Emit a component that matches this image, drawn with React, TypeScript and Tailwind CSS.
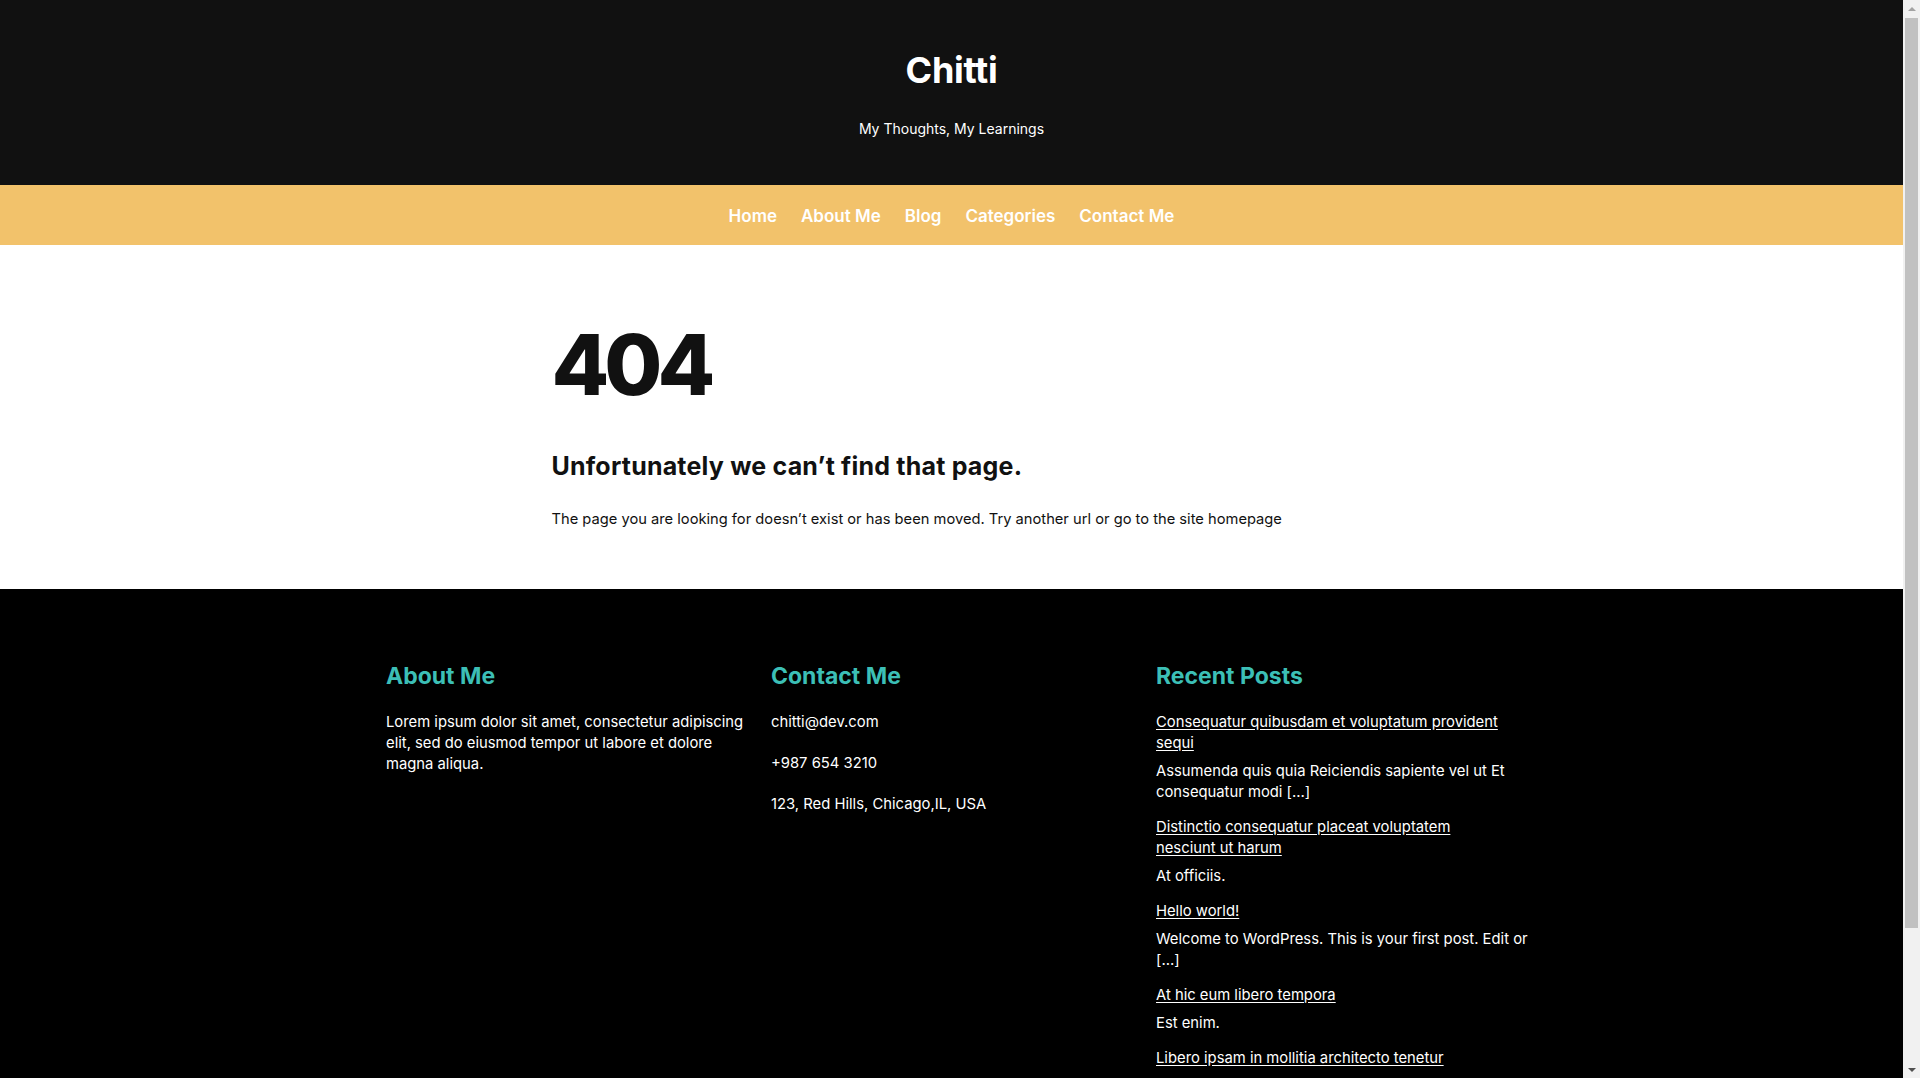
import React from 'react';

const navLinks = ['Home', 'About Me', 'Blog', 'Categories', 'Contact Me'];

const recentPosts = [
  {
    title: 'Consequatur quibusdam et voluptatum provident sequi',
    excerpt: 'Assumenda quis quia Reiciendis sapiente vel ut Et consequatur modi […]',
  },
  {
    title: 'Distinctio consequatur placeat voluptatem nesciunt ut harum',
    excerpt: 'At officiis.',
  },
  {
    title: 'Hello world!',
    excerpt: 'Welcome to WordPress. This is your first post. Edit or […]',
  },
  {
    title: 'At hic eum libero tempora',
    excerpt: 'Est enim.',
  },
  {
    title: 'Libero ipsam in mollitia architecto tenetur',
    excerpt: 'Quia voluptas.',
  },
];

// the browser's classic scrollbar, as it appears in the screenshot
const Scrollbar: React.FC = () => (
  <div className="fixed top-0 right-0 h-screen w-[17px] bg-[#f1f1f1] flex flex-col items-center">
    <div className="h-[17px] flex items-center justify-center">
      <div className="w-0 h-0 border-x-[4px] border-x-transparent border-b-[4px] border-b-[#a3a3a3]" />
    </div>
    <div className="w-[13px] h-[910px] mt-[1px] bg-[#c1c1c1]" />
    <div className="flex-1" />
    <div className="h-[17px] flex items-center justify-center">
      <div className="w-0 h-0 border-x-[4px] border-x-transparent border-t-[4px] border-t-[#505050]" />
    </div>
  </div>
);

const App: React.FC = () => {
  return (
    <div className="font-['Inter',sans-serif]">
      <div className="mr-[17px]">
        <header className="bg-[#111111] h-[185px] flex flex-col items-center">
          <h1 className="text-white text-[36px] font-bold leading-none mt-[52px] tracking-[-0.3px]">Chitti</h1>
          <p className="text-white text-[14px] mt-[30px]">My Thoughts, My Learnings</p>
        </header>

        <nav className="bg-[#f2c26b] h-[60px] pt-[4px] flex justify-center items-center">
          <ul className="flex gap-6">
            {navLinks.map((link) => (
              <li key={link} className="text-white text-[17px] font-semibold cursor-pointer">
                {link}
              </li>
            ))}
          </ul>
        </nav>

        <main className="bg-white h-[344px]">
          <div className="w-[800px] mx-auto pt-[78px]">
            <h2 className="text-[#111111] text-[84px] font-extrabold leading-none tracking-[-5px]">404</h2>
            <h3 className="text-[#111111] text-[25px] font-bold mt-[41px] tracking-[0.2px]">Unfortunately we can’t find that page.</h3>
            <p className="text-[#111111] text-[14.7px] mt-[22px]">
              The page you are looking for doesn’t exist or has been moved. Try another url or go to the site homepage
            </p>
          </div>
        </main>

        <footer className="bg-black pt-[70px] pb-[110px]">
          <div className="w-[1131px] mx-auto grid grid-cols-3 gap-6">
            <div>
              <h4 className="text-[#3cbfb6] text-[23px] font-bold">About Me</h4>
              <p className="text-white text-[14.8px] leading-[21px] mt-[18px]">
                Lorem ipsum dolor sit amet, consectetur adipiscing elit, sed do eiusmod tempor ut labore et dolore magna aliqua.
              </p>
            </div>
            <div>
              <h4 className="text-[#3cbfb6] text-[23px] font-bold">Contact Me</h4>
              <div className="mt-[18px] flex flex-col gap-[20px] text-white text-[14.8px] leading-[21px]">
                <p>chitti@dev.com</p>
                <p>+987 654 3210</p>
                <p>123, Red Hills, Chicago,IL, USA</p>
              </div>
            </div>
            <div className="w-[378px]">
              <h4 className="text-[#3cbfb6] text-[23px] font-bold">Recent Posts</h4>
              <ul className="mt-[18px] flex flex-col gap-[14px]">
                {recentPosts.map((post) => (
                  <li key={post.title} className="text-white text-[14.8px] leading-[21px]">
                    <a href="#" className="block max-w-[350px] underline underline-offset-2">{post.title}</a>
                    <p className="mt-[7px]">{post.excerpt}</p>
                  </li>
                ))}
              </ul>
            </div>
          </div>
        </footer>
      </div>
      <Scrollbar />
    </div>
  );
};

export default App;
